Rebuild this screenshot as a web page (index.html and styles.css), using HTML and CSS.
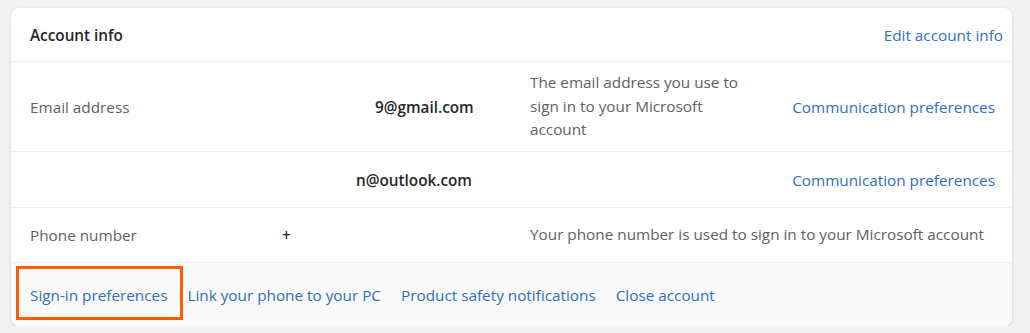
FILE: index.html
```html
<!DOCTYPE html>
<html lang="en">
<head>
  <meta charset="UTF-8">
  <title>Account info</title>
  <link rel="stylesheet" href="styles.css">
</head>
<body>
  <div class="card">
    <div class="card-header">
      <h3>Account info</h3>
      <a href="#" class="link">Edit account info</a>
    </div>

    <div class="info-row email-row">
      <div class="label">Email address</div>
      <div class="value"><span class="mail gmail">9@gmail.com</span></div>
      <div class="desc">The email address you use to sign in to your Microsoft account</div>
      <div class="action"><a href="#" class="link">Communication preferences</a></div>
    </div>

    <div class="info-row alias-row">
      <div class="label"></div>
      <div class="value"><span class="mail outlook">n@outlook.com</span></div>
      <div class="desc"></div>
      <div class="action"><a href="#" class="link">Communication preferences</a></div>
    </div>

    <div class="info-row phone-row">
      <div class="label">Phone number</div>
      <div class="value">+</div>
      <div class="desc wide">Your phone number is used to sign in to your Microsoft account</div>
    </div>

    <div class="card-footer">
      <a href="#" class="link highlighted">Sign-in preferences</a>
      <a href="#" class="link">Link your phone to your PC</a>
      <a href="#" class="link">Product safety notifications</a>
      <a href="#" class="link">Close account</a>
    </div>
  </div>
</body>
</html>
```

FILE: styles.css
```css
body {
  margin: 0;
  padding: 8px 18px 0 11px;
  background: #f3f3f3;
  font-family: "Open Sans", "Noto Sans", sans-serif;
  font-size: 15.3px;
  color: #616161;
}
.card {
  background: #fff;
  border-radius: 8px;
  box-shadow: 0 1px 3px rgba(0, 0, 0, 0.18);
  overflow: hidden;
}
.link {
  color: #2b6fc6;
  text-decoration: none;
}
.card-header {
  display: flex;
  justify-content: space-between;
  align-items: center;
  height: 53px;
  padding: 0 9px 0 19px;
  border-bottom: 1px solid #efefef;
}
.card-header h3 {
  margin: 0;
  font-size: 15.3px;
  font-weight: 600;
  color: #262626;
}
.info-row {
  display: grid;
  grid-template-columns: 252px 248px 1fr auto;
  align-items: center;
  padding: 0 17px 0 19px;
  border-bottom: 1px solid #efefef;
}
.email-row {
  height: 89px;
}
.alias-row {
  height: 55px;
}
.phone-row {
  height: 54px;
  border-bottom: none;
}
.value {
  font-weight: 600;
  color: #262626;
}
.mail {
  display: inline-block;
  white-space: nowrap;
}
.gmail {
  margin-left: 93px;
}
.outlook {
  margin-left: 74px;
}
.desc {
  max-width: 222px;
  line-height: 23.5px;
}
.desc.wide {
  grid-column: 3 / 5;
  max-width: none;
}
.action {
  text-align: right;
}
.card-footer {
  display: flex;
  align-items: center;
  gap: 20px;
  height: 63px;
  padding: 0 19px;
  background: #f9f9f9;
  border-top: 1px solid #efefef;
}
.highlighted {
  position: relative;
}
.highlighted::after {
  content: "";
  position: absolute;
  left: -14px;
  right: -16px;
  top: -19px;
  bottom: -15px;
  border: 3px solid #ff5b00;
}
```
